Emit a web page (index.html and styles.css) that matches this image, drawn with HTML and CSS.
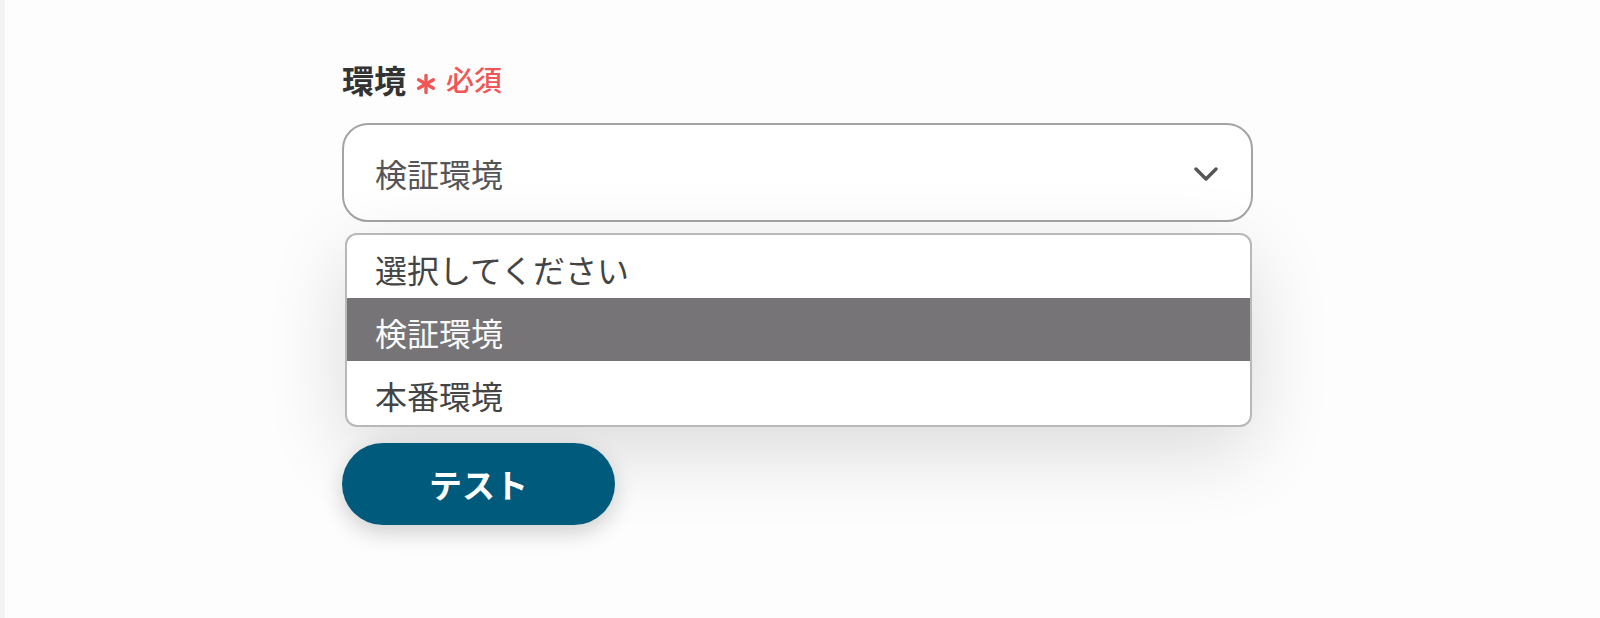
FILE: index.html
```html
<!DOCTYPE html>
<html lang="ja">
<head>
    <meta charset="utf-8">
    <title>環境</title>
    <link rel="stylesheet" href="styles.css">
</head>
<body>
    <div class="field">
        <div class="field-label">
            <span class="label-text">環境</span>
            <svg class="required-mark" width="20" height="20" viewBox="0 0 20 20">
                <g stroke="#f05656" stroke-width="3.4" stroke-linecap="round">
                    <line x1="10" y1="1.5" x2="10" y2="18.5"/>
                    <line x1="2.6" y1="5.75" x2="17.4" y2="14.25"/>
                    <line x1="2.6" y1="14.25" x2="17.4" y2="5.75"/>
                </g>
            </svg>
            <span class="required-text">必須</span>
        </div>

        <div class="select-box">
            <span class="select-value">検証環境</span>
            <svg class="chevron" width="24" height="16" viewBox="0 0 24 16">
                <polyline points="2,3 12,13 22,3" fill="none" stroke="#555" stroke-width="3.4" stroke-linecap="round" stroke-linejoin="round"/>
            </svg>
        </div>

        <ul class="options">
            <li class="option">選択してください</li>
            <li class="option active">検証環境</li>
            <li class="option">本番環境</li>
        </ul>

        <button type="button" class="test-button">テスト</button>
    </div>
</body>
</html>
```

FILE: styles.css
```css
html,
body {
    height: 100%;
}

body {
    margin: 0;
    border-left: 5px solid #f4f3f6;
    background-color: #fdfdfd;
    font-family: "Noto Sans CJK JP", "Noto Sans", sans-serif;
    color: #333;
    box-sizing: border-box;
}

.field {
    width: 911px;
    margin-left: 337px;
    padding-top: 55px;
}

.field-label {
    display: flex;
    align-items: center;
    height: 48px;
}

.label-text {
    font-size: 32px;
    font-weight: 700;
    color: #333;
}

.required-mark {
    margin: 10px 10px 0 10px;
}

.required-text {
    font-size: 28px;
    font-weight: 500;
    color: #f05656;
}

.select-box {
    display: flex;
    align-items: center;
    justify-content: space-between;
    height: 99px;
    margin-top: 20px;
    padding: 0 33px 0 31px;
    border: 2px solid #a4a3a6;
    border-radius: 26px;
    background-color: #fff;
    box-sizing: border-box;
}

.select-value {
    font-size: 32px;
    color: #555;
}

.chevron {
    margin-top: 2px;
}

.options {
    list-style: none;
    margin: 11px 1px 0 3px;
    padding: 0 0 1px 0;
    border: 2px solid #b8b7ba;
    border-radius: 12px;
    background-color: #fff;
    overflow: hidden;
    box-shadow: 0 24px 80px rgba(0, 0, 0, 0.14);
}

.option {
    display: flex;
    align-items: center;
    height: 63px;
    padding: 4px 0 0 28px;
    box-sizing: border-box;
    font-size: 32px;
    color: #444;
}

.option.active {
    background-color: #767477;
    color: #fafafa;
}

.test-button {
    display: block;
    width: 273px;
    height: 82px;
    margin-top: 16px;
    border: none;
    border-radius: 41px;
    background-color: #005a7c;
    color: #fff;
    font-family: inherit;
    font-size: 33px;
    font-weight: 700;
    box-shadow: 0 8px 22px rgba(0, 0, 0, 0.18);
    cursor: pointer;
}
```
